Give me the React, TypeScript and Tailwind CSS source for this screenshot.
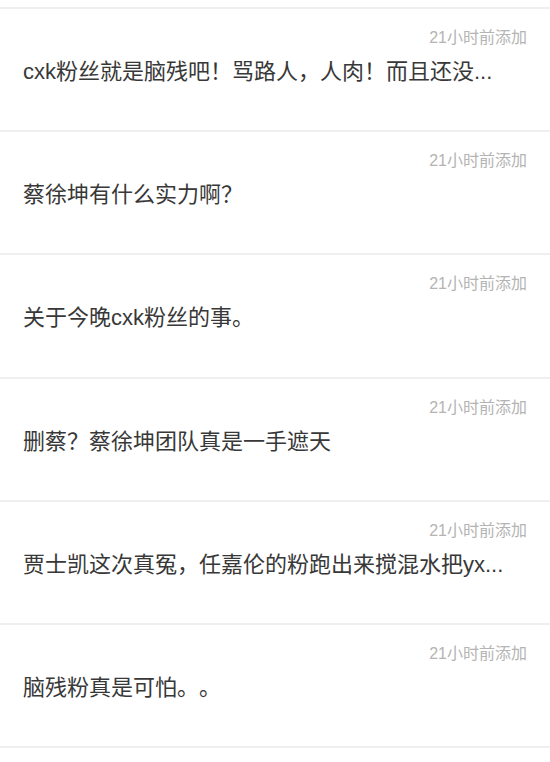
import React from 'react'

type Item = {
    id: number
    title: string
    time: string
}

const items: Item[] = [
    { id: 1, title: 'cxk粉丝就是脑残吧！骂路人，人肉！而且还没...', time: '21小时前添加' },
    { id: 2, title: '蔡徐坤有什么实力啊？', time: '21小时前添加' },
    { id: 3, title: '关于今晚cxk粉丝的事。', time: '21小时前添加' },
    { id: 4, title: '删蔡？蔡徐坤团队真是一手遮天', time: '21小时前添加' },
    { id: 5, title: '贾士凯这次真冤，任嘉伦的粉跑出来搅混水把yx...', time: '21小时前添加' },
    { id: 6, title: '脑残粉真是可怕。。', time: '21小时前添加' },
]

const Row = ({ item }: { item: Item }) => {
    return (
        <div className="h-[123.2px] border-b-2 border-[#efefef] flex flex-col px-[23px]">
            <div className="pt-[19px] h-[39px] flex justify-end text-[16px] leading-[20px] text-[#b4b4b4] whitespace-nowrap">
                {item.time}
            </div>
            <div className="mt-[9px] text-[22px] leading-[30px] text-[#383838] whitespace-nowrap [text-spacing-trim:space-all]">
                {item.title}
            </div>
        </div>
    )
}

export default function App() {
    return (
        <div
            className="w-[550px] h-[762px] bg-white overflow-hidden"
            style={{ fontFamily: '"Liberation Sans", "Noto Sans CJK SC", sans-serif' }}
        >
            <div className="h-[9px] border-b-2 border-[#efefef]" />
            {items.map((item) => (
                <Row item={item} key={item.id} />
            ))}
        </div>
    )
}
